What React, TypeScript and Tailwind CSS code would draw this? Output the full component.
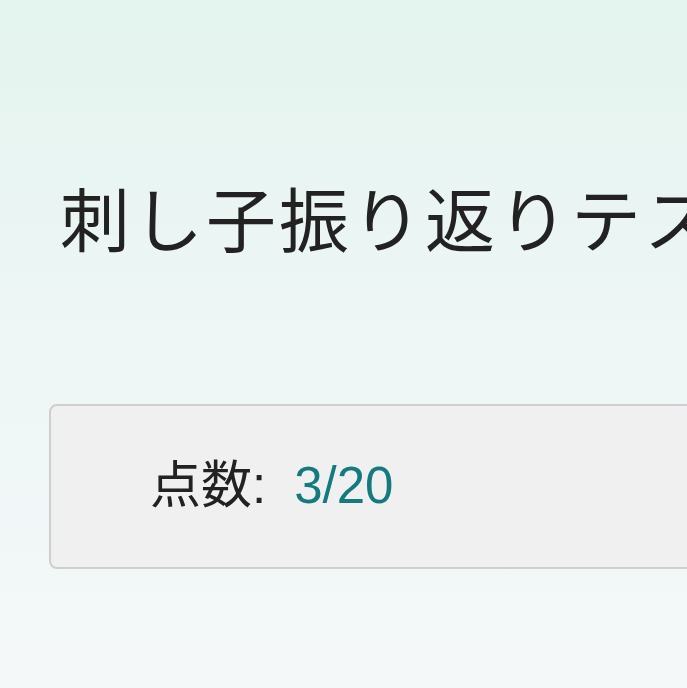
export default function App() {
  return (
    <div className="min-h-[688px] w-full overflow-hidden bg-gradient-to-b from-[#e4f4ee] via-[#eef6f6] to-[#f4f8f9] pl-[49px] pt-[181px]" style={{ fontFamily: '"Liberation Sans", "Noto Sans CJK JP", sans-serif' }}>
      <h1 className="ml-[11px] whitespace-nowrap text-[70px] font-normal leading-[72px] tracking-[3px] text-[#222222]" style={{ fontFamily: '"Noto Sans CJK JP", sans-serif' }}>
        刺し子振り返りテスト
      </h1>
      <div className="mt-[151px] flex h-[165px] w-[800px] items-center rounded-[8px] border-2 border-[#cfcfcf] bg-[#f0f0f0] pl-[99px]">
        <span className="text-[51px] text-[#222222]">点数:</span>
        <span className="ml-[28px] text-[51px] text-[#137a7e]">3/20</span>
      </div>
    </div>
  );
}
